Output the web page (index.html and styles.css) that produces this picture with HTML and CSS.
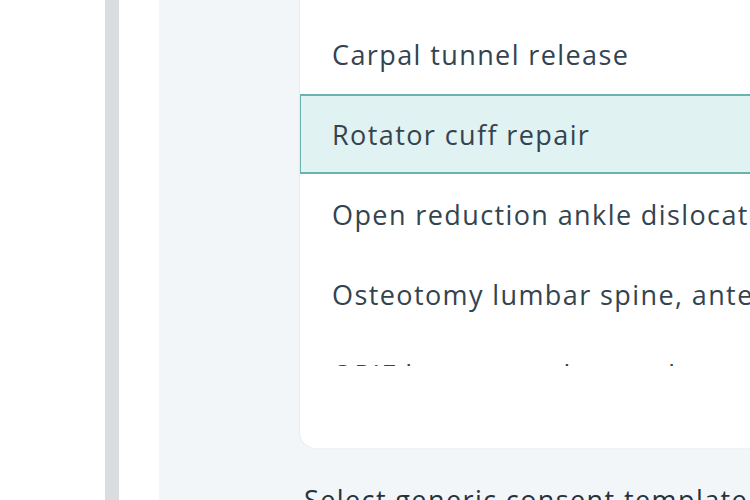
FILE: index.html
```html
<!DOCTYPE html>
<html lang="en">
<head>
    <meta charset="UTF-8">
    <meta name="viewport" content="width=device-width, initial-scale=1.0">
    <title>Consent procedures</title>
    <link rel="stylesheet" href="styles.css">
</head>
<body>
    <div class="page">
        <div class="gutter"></div>
        <div class="rail"></div>
        <div class="spacer"></div>
        <div class="panel">
            <div class="card">
                <div class="list">
                    <div class="item">Carpal tunnel release</div>
                    <div class="item selected">Rotator cuff repair</div>
                    <div class="item">Open reduction ankle dislocation</div>
                    <div class="item">Osteotomy lumbar spine, anterior approach</div>
                    <div class="item">ORIF humerus, plate and screws</div>
                </div>
            </div>
            <p class="label">Select generic consent template</p>
        </div>
    </div>
</body>
</html>
```

FILE: styles.css
```css
*{
    box-sizing: border-box;
}
body{
    margin: 0;
    font-family: 'Open Sans', 'Liberation Sans', sans-serif;
    background: #fff;
    overflow: hidden;
}
.page{
    display: flex;
    height: 500px;
    overflow: hidden;
}
.gutter{
    width: 105px;
    background: #fff;
}
.rail{
    width: 14px;
    background: #d9dde0;
}
.spacer{
    width: 40px;
    background: #fff;
}
.panel{
    flex: 1;
    background: #f3f6f9;
    padding-left: 141px;
    overflow: hidden;
}
.card{
    width: 520px;
    margin-top: -20px;
    background: #fff;
    border-radius: 16px;
    box-shadow: -1px 0 2px rgba(0, 0, 0, 0.05);
    padding: 34px 0 82px;
}
.list{
    height: 352px;
    overflow: hidden;
}
.item{
    height: 80px;
    display: flex;
    align-items: center;
    padding-left: 31px;
    border: 2px solid transparent;
    margin-left: -1px;
    font-size: 27px;
    letter-spacing: 1.4px;
    color: #34444f;
    white-space: nowrap;
}
.selected{
    background: #e0f2f1;
    border-color: #6ab4b0;
}
.label{
    margin: 33px 0 0 4px;
    font-size: 27px;
    letter-spacing: 1.4px;
    color: #26333d;
    white-space: nowrap;
}
```
